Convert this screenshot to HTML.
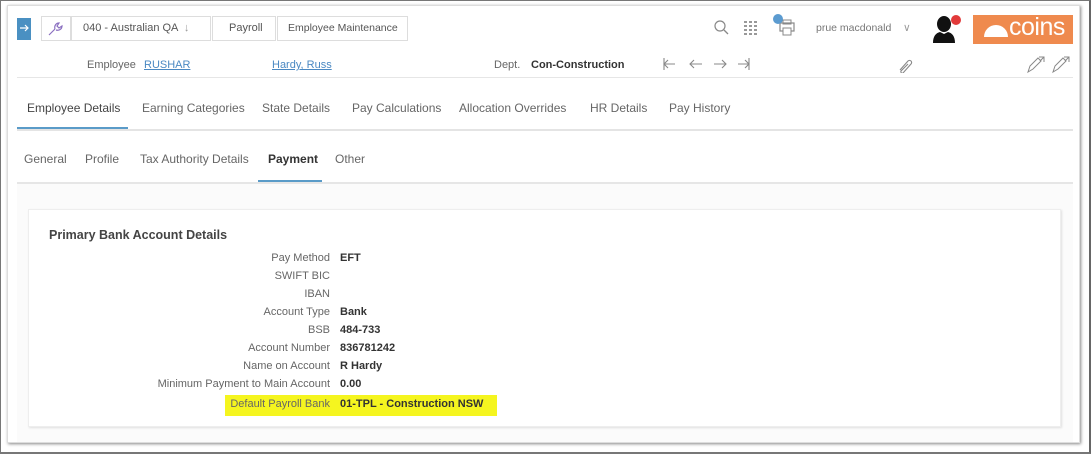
<!DOCTYPE html>
<html><head><style>
*{margin:0;padding:0;box-sizing:border-box}
body{width:1091px;height:454px;background:#fff;font-family:"Liberation Sans",sans-serif;color:#555;position:relative;overflow:hidden;font-size:11.5px}
.frame{position:absolute;left:0;top:0;width:1091px;height:454px;border:1px solid #777;border-right:2px solid #666;border-bottom:2px solid #777}
.panel{position:absolute;left:7px;top:5px;width:1073px;height:438px;background:#fff;box-shadow:1px 1px 3px #888;border:1px solid #ddd}
.abs{position:absolute}
.t{position:absolute;white-space:nowrap}
.crumb{position:absolute;top:16px;height:25px;border:1px solid #ddd;background:#fff;font-size:11px;color:#555;line-height:23px}
.tab{position:absolute;top:101px;font-size:12px;color:#666}
.sub{position:absolute;top:152px;font-size:12px;color:#666}
.lab{position:absolute;right:761px;font-size:11px;color:#666;text-align:right;white-space:nowrap}
.val{position:absolute;left:340px;font-size:11px;color:#333;font-weight:bold;white-space:nowrap}
</style></head><body>
<div class="frame"></div>
<div class="panel"></div>
<div class="abs" style="left:17px;top:18px;width:14px;height:22px;background:#4a90c2"></div>
<svg class="abs" style="left:18px;top:22px" width="12" height="12"><path d="M2 6h8M7 3l3 3-3 3" stroke="#fff" fill="none" stroke-width="1.2"/></svg>
<div class="crumb" style="left:41px;width:30px"></div>
<svg class="abs" style="left:45px;top:20px" width="18" height="18"><path d="M4 15l6-6M10 9c-1-3 1-6 4-6l-2 3 2 2 3-2c0 3-3 5-6 4" stroke="#8a6fc0" fill="none" stroke-width="1.2"/></svg>
<div class="crumb" style="left:71px;width:140px;padding-left:11px">040 - Australian QA &nbsp;<span style="color:#999">↓</span></div>
<div class="crumb" style="left:212px;width:64px;padding-left:16px">Payroll</div>
<div class="crumb" style="left:277px;width:131px;padding-left:10px;font-size:10.5px">Employee Maintenance</div>
<svg class="abs" style="left:713px;top:19px" width="16" height="16"><circle cx="7" cy="7" r="5" stroke="#888" fill="none" stroke-width="1.2"/><path d="M11 11l4 4" stroke="#888" stroke-width="1.3"/></svg>
<svg class="abs" style="left:744px;top:21px" width="14" height="14"><g fill="#999"><rect x="0" y="0" width="3" height="2"/><rect x="5" y="0" width="3" height="2"/><rect x="10" y="0" width="3" height="2"/><rect x="0" y="4" width="3" height="2"/><rect x="5" y="4" width="3" height="2"/><rect x="10" y="4" width="3" height="2"/><rect x="0" y="8" width="3" height="2"/><rect x="5" y="8" width="3" height="2"/><rect x="10" y="8" width="3" height="2"/><rect x="0" y="12" width="3" height="2"/><rect x="5" y="12" width="3" height="2"/><rect x="10" y="12" width="3" height="2"/></g></svg>
<svg class="abs" style="left:773px;top:14px" width="26" height="24"><rect x="7" y="9" width="14" height="8" stroke="#888" fill="none" stroke-width="1.2"/><rect x="10" y="6" width="8" height="4" stroke="#888" fill="none"/><rect x="10" y="14" width="8" height="7" stroke="#888" fill="#fff"/><circle cx="5" cy="5" r="5" fill="#5b9bd0"/></svg>
<div class="t" style="left:816px;top:22px;font-size:10.5px;color:#777">prue macdonald &nbsp;&nbsp; <span style="color:#999">∨</span></div>
<svg class="abs" style="left:930px;top:14px" width="32" height="30"><ellipse cx="14" cy="10" rx="7" ry="8" fill="#111"/><path d="M3 29c0-7 3-10 7-11l4 2 4-2c4 1 7 4 7 11z" fill="#111"/><circle cx="26" cy="6" r="5" fill="#e23a3a"/></svg>
<div class="abs" style="left:973px;top:15px;width:100px;height:29px;background:#ef8a4e"></div>
<svg class="abs" style="left:983px;top:20px" width="30" height="20"><path d="M1 17a12 12 0 0 1 24 0z" fill="#fff"/></svg>
<div class="t" style="left:1009px;top:13px;font-size:25px;color:#fff;letter-spacing:-0.5px">coins</div>
<div class="t" style="left:87px;top:59px;font-size:11px;color:#666">Employee</div>
<div class="t" style="left:144px;top:59px;font-size:11px;color:#4a88c2;text-decoration:underline">RUSHAR</div>
<div class="t" style="left:272px;top:59px;font-size:11px;color:#4a88c2;text-decoration:underline">Hardy, Russ</div>
<div class="t" style="left:494px;top:59px;font-size:11px;color:#666">Dept.</div>
<div class="t" style="left:531px;top:59px;font-size:11px;color:#333;font-weight:bold">Con-Construction</div>
<svg class="abs" style="left:660px;top:56px" width="95" height="16"><g stroke="#888" fill="none" stroke-width="1.1"><path d="M4 2v12M4 8h11M8 4l-4 4 4 4"/><path d="M30 8h12M34 4l-4 4 4 4"/><path d="M54 8h12M62 4l4 4-4 4"/><path d="M89 2v12M78 8h11M85 4l4 4-4 4"/></g></svg>
<svg class="abs" style="left:896px;top:57px" width="18" height="16"><path d="M4 13l8-9a2 2 0 0 1 3 3l-8 9a1.5 1.5 0 0 1-2-2l7-7" stroke="#888" fill="none" stroke-width="1.1"/></svg>
<svg class="abs" style="left:1025px;top:55px" width="22" height="20"><path d="M3 17l2-6 8-8 3 3-8 8z" stroke="#888" fill="none"/><path d="M14 2h5v5M19 2l-4 4" stroke="#888" fill="none"/></svg>
<svg class="abs" style="left:1050px;top:55px" width="22" height="20"><path d="M3 17l2-6 8-8 3 3-8 8z" stroke="#888" fill="none"/><path d="M14 2h5v5M19 2l-4 4" stroke="#888" fill="none"/></svg>
<div class="abs" style="left:17px;top:77px;width:1056px;height:1px;background:#e6e6e6"></div>
<div class="tab" style="left:27px;color:#444">Employee Details</div>
<div class="tab" style="left:142px">Earning Categories</div>
<div class="tab" style="left:262px">State Details</div>
<div class="tab" style="left:352px">Pay Calculations</div>
<div class="tab" style="left:459px">Allocation Overrides</div>
<div class="tab" style="left:590px">HR Details</div>
<div class="tab" style="left:669px">Pay History</div>
<div class="abs" style="left:17px;top:127px;width:111px;height:2px;background:#5a9bc8"></div>
<div class="abs" style="left:17px;top:129px;width:1056px;height:2px;background:#e4e4e4"></div>
<div class="sub" style="left:24px">General</div>
<div class="sub" style="left:85px">Profile</div>
<div class="sub" style="left:140px">Tax Authority Details</div>
<div class="sub" style="left:268px;color:#333;font-weight:bold">Payment</div>
<div class="sub" style="left:335px">Other</div>
<div class="abs" style="left:258px;top:180px;width:64px;height:2px;background:#5a9bc8"></div>
<div class="abs" style="left:17px;top:182px;width:1056px;height:260px;background:#fbfbfb;border-top:2px solid #e6e6e6"></div>
<div class="abs" style="left:28px;top:209px;width:1033px;height:218px;background:#fff;border:1px solid #eee;box-shadow:1px 1px 2px #e0e0e0"></div>
<div class="t" style="left:49px;top:228px;font-size:12.5px;color:#444;font-weight:bold">Primary Bank Account Details</div>
<div class="abs" style="left:225px;top:395px;width:272px;height:21px;background:#f5f51f"></div>
<div class="lab" style="top:252px">Pay Method</div><div class="val" style="top:252px">EFT</div>
<div class="lab" style="top:270px">SWIFT BIC</div>
<div class="lab" style="top:288px">IBAN</div>
<div class="lab" style="top:306px">Account Type</div><div class="val" style="top:306px">Bank</div>
<div class="lab" style="top:324px">BSB</div><div class="val" style="top:324px">484-733</div>
<div class="lab" style="top:342px">Account Number</div><div class="val" style="top:342px">836781242</div>
<div class="lab" style="top:360px">Name on Account</div><div class="val" style="top:360px">R Hardy</div>
<div class="lab" style="top:378px">Minimum Payment to Main Account</div><div class="val" style="top:378px">0.00</div>
<div class="lab" style="top:398px">Default Payroll Bank</div><div class="val" style="top:398px">01-TPL - Construction NSW</div>
</body></html>
